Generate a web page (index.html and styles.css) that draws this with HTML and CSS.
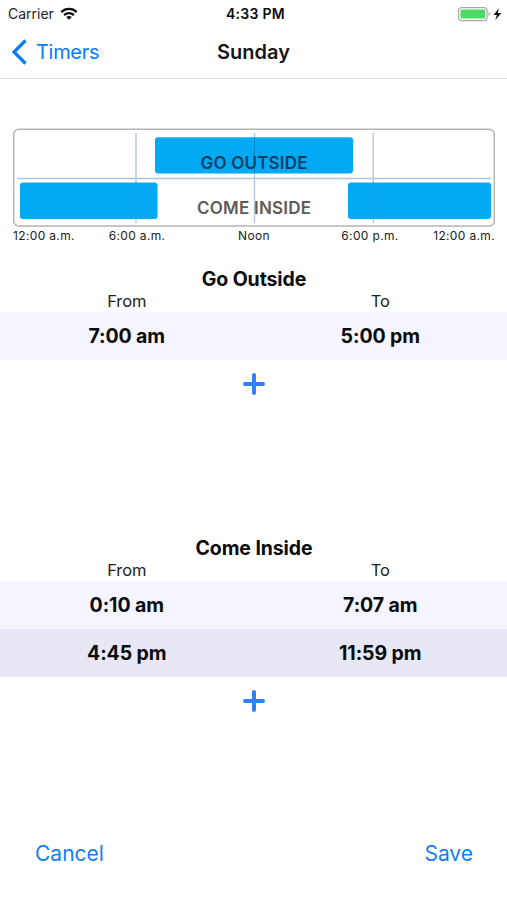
FILE: index.html
```html
<!DOCTYPE html>
<html lang="en">
<head>
<meta charset="utf-8">
<title>Sunday</title>
<link rel="stylesheet" href="styles.css">
</head>
<body>
<main class="screen">
  <div class="status">
    <div class="carrier"><span>Carrier</span>
      <svg width="18" height="14" viewBox="0 0 18 14" fill="none" stroke="#111" stroke-width="2.3"><path d="M1.3 5.1C5.6.9 12.4.9 16.7 5.1M4.1 8.1c2.8-2.6 7-2.6 9.8 0"/><path d="M9 12.8L6.1 10.1c1.6-1.5 4.2-1.5 5.8 0z" fill="#111" stroke="none"/></svg>
    </div>
    <span class="clock">4:33 PM</span>
    <svg class="battery" width="45" height="16" viewBox="0 0 45 16"><rect x=".6" y="1.6" width="28.5" height="13" rx="3" fill="#fff" stroke="#aaa" stroke-width="1.2"/><rect x="2.5" y="3.6" width="24.5" height="9" rx="1" fill="#4cd964"/><path d="M30.5 6q1.7.3 1.7 2t-1.700 2z" fill="#aaa"/><path d="M41 2.300L35.500 9h3.400L37.200 14.200 43.300 7h-3.600z" fill="#111"/></svg>
  </div>
  <header class="nav">
    <a class="back"><svg width="17" height="26" viewBox="0 0 17 26" fill="none" stroke="#087cf5" stroke-width="3.200"><path d="M14.500 1.500L3 13l11.500 11.500"/></svg><span>Timers</span></a>
    <h1>Sunday</h1>
  </header>
  <section class="chart">
    <svg width="482" height="99" viewBox="13 128 482 99">
      <rect x="13.700" y="129.200" width="480.600" height="96.800" rx="5" fill="#fff" stroke="#b4b4b4" stroke-width="1.500"/>
      <path d="M136 133v90M373.300 133v90M17 178.500h474" stroke="#b0c4e0" stroke-width="1.300"/>
      <g fill="#04a9f4"><rect x="155" y="137.300" width="198" height="36.300" rx="3"/><rect x="20" y="182.500" width="137.500" height="36.500" rx="3"/><rect x="348" y="182.500" width="143" height="36.500" rx="3"/></g>
      <path d="M136 182.500v36.500M373.300 182.500v36.500" stroke="#0aa2ec" stroke-width="1"/>
      <path d="M254.500 133v4.300M254.500 173.600v49.400" stroke="#b0c4e0" stroke-width="1.300"/><path d="M254.500 137.300v36.300" stroke="#0789c8"/>
      <g class="chart-label"><text x="254" y="169" textLength="107" fill="#063f61">GO OUTSIDE</text><text x="254" y="214.200" textLength="114" fill="#5b5b5b">COME INSIDE</text></g>
    </svg>
    <div class="ticks"><span>12:00 a.m.</span><span>6:00 a.m.</span><span>Noon</span><span>6:00 p.m.</span><span>12:00 a.m.</span></div>
  </section>
  <section class="group outside">
    <h2>Go Outside</h2>
    <div class="heads"><span>From</span><span>To</span></div>
    <div class="row"><span>7:00 am</span><span>5:00 pm</span></div>
    <div class="add"><svg width="22" height="22" viewBox="0 0 22 22"><path d="M11 2v18M2 11h18" stroke="#2f80f5" stroke-width="4" stroke-linecap="round"/></svg></div>
  </section>
  <section class="group inside">
    <h2>Come Inside</h2>
    <div class="heads"><span>From</span><span>To</span></div>
    <div class="row"><span>0:10 am</span><span>7:07 am</span></div>
    <div class="row alt"><span>4:45 pm</span><span>11:59 pm</span></div>
    <div class="add"><svg width="22" height="22" viewBox="0 0 22 22"><path d="M11 2v18M2 11h18" stroke="#2f80f5" stroke-width="4" stroke-linecap="round"/></svg></div>
  </section>
  <footer class="actions"><a>Cancel</a><a>Save</a></footer>
</main>
</body>
</html>
```
FILE: styles.css
```css
* { box-sizing: border-box; }
body { margin: 0; background: #fff; }
.screen { width: 507px; height: 900px; display: flex; flex-direction: column; overflow: hidden; font-family: Inter, "Liberation Sans", sans-serif; color: #0b0b0b; }
svg { display: block; flex: none; }
.status { height: 27px; display: grid; grid-template-columns: 1fr auto 1fr; align-items: center; padding: 0 4px 0 8px; font-size: 14px; }
.carrier { display: flex; align-items: center; gap: 6px; color: #222; }
.clock { font-weight: 600; letter-spacing: .3px; }
.battery { justify-self: end; }
.nav { height: 52px; display: grid; grid-template-columns: 1fr auto 1fr; align-items: center; border-bottom: 1px solid #dedede; padding: 0 11px 2px 11px; }
.back { display: flex; align-items: center; gap: 8px; color: #087cf5; font-size: 20px; letter-spacing: -.3px; }
h1 { margin: 0; font-size: 20px; font-weight: 600; color: #161616; }
.chart { margin: 49px 12px 0 13px; height: 117.500px; }
.chart-label { font-size: 17px; font-weight: 600; text-anchor: middle; }
.ticks { display: grid; grid-template-columns: 78px 92px 142px 90px 80px; text-align: center; font-size: 12px; line-height: 18px; letter-spacing: .35px; color: #222; }
.ticks span:first-child { text-align: left; }
.ticks span:last-child { text-align: right; }
.group { display: flex; flex-direction: column; }
.outside { margin-top: 20.500px; height: 269px; }
h2 { margin: 0; height: 27px; line-height: 27px; text-align: center; font-size: 19.500px; font-weight: 700; letter-spacing: -.1px; text-indent: 1px; }
.heads { display: grid; grid-template-columns: 1fr 1fr; height: 18px; line-height: 17px; text-align: center; font-size: 16.500px; letter-spacing: -.1px; color: #222; margin-bottom: 1px; }
.row { display: grid; grid-template-columns: 1fr 1fr; height: 48px; line-height: 48px; text-align: center; font-size: 19.500px; font-weight: 700; letter-spacing: -.1px; background: #f4f5ff; }
.alt { background: #e7e7f5; }
.add { display: flex; justify-content: center; padding-top: 13px; }
.actions { margin-top: auto; height: 94px; padding: 32px 34px 0 35px; display: flex; justify-content: space-between; font-size: 21px; line-height: 31px; color: #1580ed; }
```
